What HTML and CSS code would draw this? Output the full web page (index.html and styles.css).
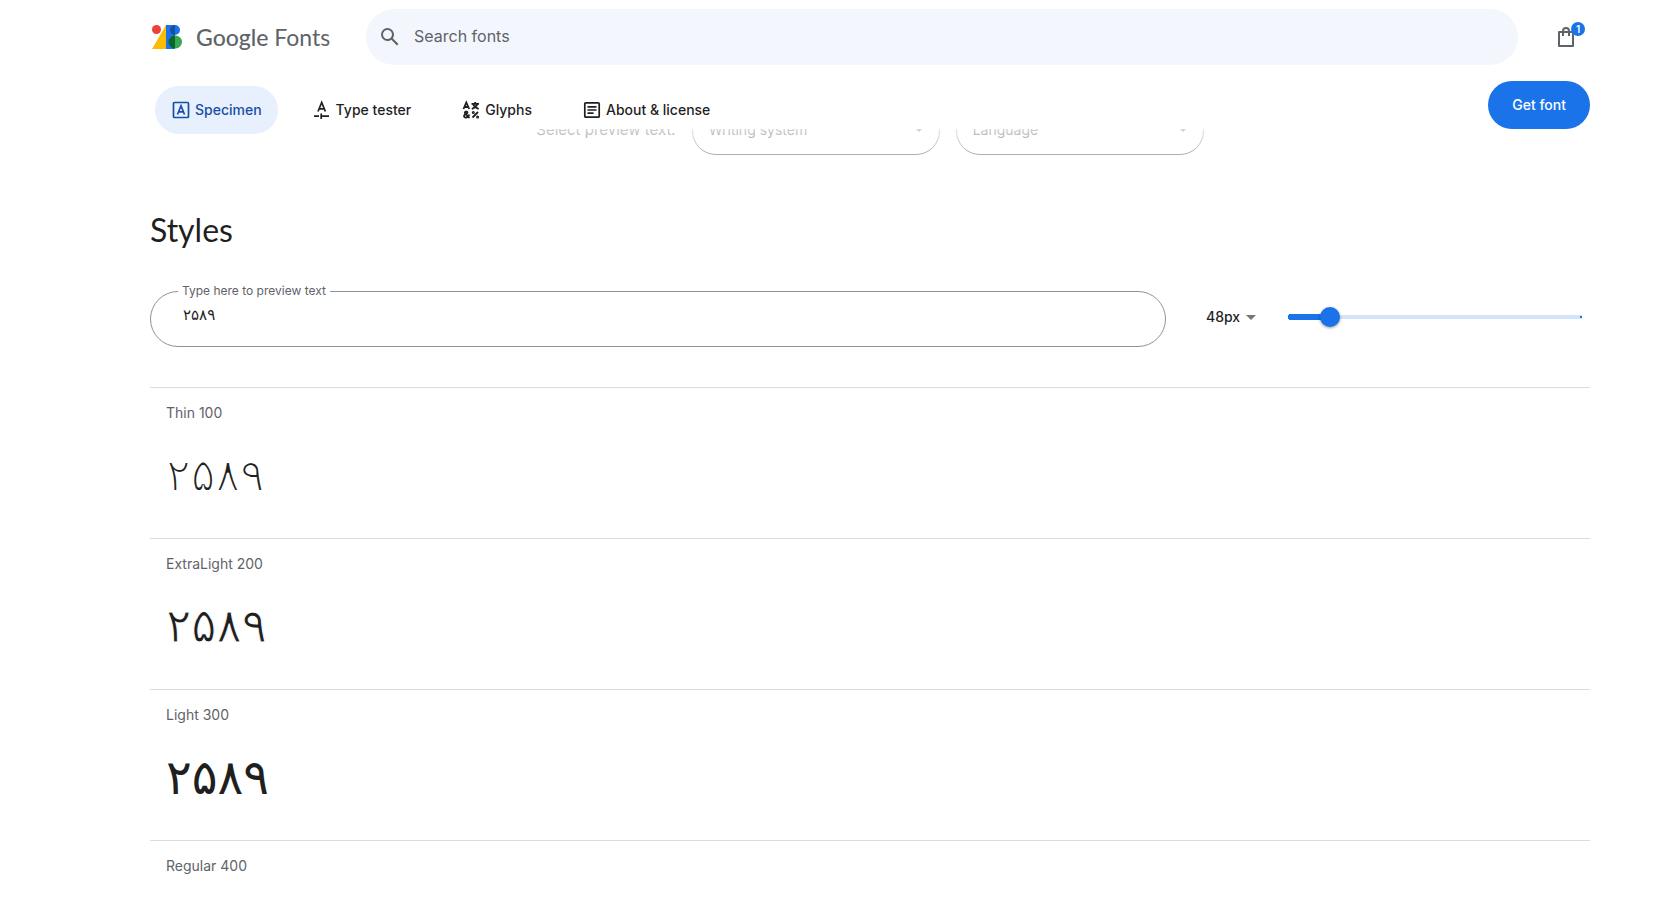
FILE: index.html
```html
<!DOCTYPE html>
<html lang="en">
<head>
<meta charset="utf-8">
<title>Styles - Google Fonts</title>
<link rel="stylesheet" href="styles.css">
</head>
<body>
<header class="header">
  <div class="topbar">
    <a class="brand" href="#">
      <svg class="brand-mark" viewBox="0 0 30 24" aria-hidden="true">
        <path d="M14 0v24H0z" fill="#fbbc04"/>
        <circle cx="4.500" cy="4.500" r="4.500" fill="#ea4335"/>
        <path d="M14 0h9a5 5 0 0 1 0 10v14h-9z" fill="#1a73e8"/>
        <circle cx="23.500" cy="17" r="6.500" fill="#34a853"/>
        <path d="M23 0a5 5 0 0 0 0 10z" fill="#174ea6"/>
        <path d="M23 10.500a6.500 6.500 0 0 0 0 13z" fill="#0d652d"/>
      </svg>
      <span class="brand-name"><b>Google</b> Fonts</span>
    </a>
    <div class="search">
      <svg class="icon24" viewBox="0 0 24 24" aria-hidden="true"><path fill="#5f6368" d="M20.490 19l-5.730-5.730C15.530 12.200 16 10.910 16 9.500A6.500 6.500 0 1 0 9.500 16c1.410 0 2.700-.470 3.770-1.240L19 20.490 20.490 19zM5 9.500C5 7.010 7.010 5 9.500 5S14 7.010 14 9.500 11.990 14 9.500 14 5 11.990 5 9.500z"/></svg>
      <input class="search-input" type="search" placeholder="Search fonts" aria-label="Search fonts">
    </div>
    <button class="bag" type="button" aria-label="View selected families">
      <svg class="icon24" viewBox="0 0 24 24" fill="none" stroke="#5f6368" stroke-width="2" aria-hidden="true"><path d="M5 7h14v14H5z" stroke-linejoin="round"/><path d="M9 11V6a3 3 0 0 1 6 0v5"/></svg>
      <span class="badge">1</span>
    </button>
  </div>
  <div class="subbar">
    <nav class="tabs">
      <a class="tab tab-active" href="#">
        <svg class="icon20" viewBox="0 0 20 20" fill="none" stroke="currentColor" stroke-width="1.700" aria-hidden="true"><rect x="2.500" y="2.500" width="15" height="15" rx="1"/><path d="M6.500 14.500L10 5.700l3.500 8.800M7.600 11.800h4.800"/></svg>
        Specimen</a>
      <a class="tab" href="#">
        <svg class="icon20" viewBox="0 0 20 20" fill="none" stroke="currentColor" stroke-width="1.700" aria-hidden="true"><path d="M6 11.500L9.700 2.500l3.700 9M7.200 8.800h5M2 16.200h5M9.200 13.500v5.500M9.200 16.200H17"/></svg>
        Type tester</a>
      <a class="tab" href="#">
        <svg class="icon20" viewBox="0 0 20 20" fill="none" stroke="currentColor" stroke-width="1.800" aria-hidden="true"><path d="M2.500 9L5.300 2.500 8.200 9M3.500 7h3.700M10.500 3.800h7.500M14.200 2v2M12 4c1 2.500 3 4 5.700 5M16.500 4c-1 2.500-3 4-5.700 5M8.500 18L4 13.200c-1-1.500 2.500-2.500 2.500-.700 0 1.500-3.500 1.500-3.500 3.500 0 2.500 4.500 2 5.300-1.500M11.500 17.500l5.500-5.500"/><circle cx="12.300" cy="12.500" r=".600"/><circle cx="16.600" cy="17" r=".600"/></svg>
        Glyphs</a>
      <a class="tab" href="#">
        <svg class="icon20" viewBox="0 0 20 20" fill="none" stroke="currentColor" stroke-width="1.700" aria-hidden="true"><rect x="2.800" y="2.800" width="14.400" height="14.400" rx="1"/><path d="M5.500 6.800h9M5.500 10h9M5.500 13.200h6"/></svg>
        About &amp; license</a>
    </nav>
    <button class="get-font" type="button">Get font</button>
  </div>
</header>

<main class="main">
  <div class="preview-row">
    <span class="preview-label">Select preview text:</span>
    <div class="pill-select">
      <select aria-label="Writing system"><option>Writing system</option></select>
      <svg class="caret" viewBox="0 0 10 5" aria-hidden="true"><path d="M0 0h10L5 5z"/></svg>
    </div>
    <div class="pill-select">
      <select aria-label="Language"><option>Language</option></select>
      <svg class="caret" viewBox="0 0 10 5" aria-hidden="true"><path d="M0 0h10L5 5z"/></svg>
    </div>
  </div>

  <h2 class="title">Styles</h2>

  <div class="controls">
    <div class="field">
      <label class="field-label" for="preview">Type here to preview text</label>
      <input class="field-input" id="preview" type="text" value="۲۵۸۹">
    </div>
    <div class="size">
      <select class="size-select" aria-label="Font size"><option>48px</option></select>
      <svg class="caret size-caret" viewBox="0 0 10 5" aria-hidden="true"><path d="M0 0h10L5 5z"/></svg>
    </div>
    <input class="slider" type="range" min="8" max="350" value="48" aria-label="Font size slider">
  </div>

  <section class="style">
    <h3 class="style-name">Thin 100</h3>
    <p class="sample sample-thin">۲۵۸۹</p>
  </section>
  <section class="style">
    <h3 class="style-name">ExtraLight 200</h3>
    <p class="sample sample-extralight">۲۵۸۹</p>
  </section>
  <section class="style">
    <h3 class="style-name">Light 300</h3>
    <p class="sample">۲۵۸۹</p>
  </section>
  <section class="style">
    <h3 class="style-name">Regular 400</h3>
  </section>
</main>
</body>
</html>
```
FILE: styles.css
```css
* { box-sizing: border-box; }

body {
  margin: 0;
  background: #fff;
  color: #1f1f1f;
  font: 14px/20px Inter, "Liberation Sans", sans-serif;
}

button, input, select { font: inherit; color: inherit; }

a { color: inherit; text-decoration: none; }

.header {
  position: relative;
  z-index: 1;
  padding: 9px 88px 0 150px;
  background: #fff;
}

.header::after {
  content: "";
  position: absolute;
  top: 100%;
  left: 0;
  right: 0;
  height: 32px;
  background: linear-gradient(rgba(255, 255, 255, .7), rgba(255, 255, 255, 0));
  pointer-events: none;
}

.topbar { display: flex; align-items: center; }

.brand {
  display: flex;
  align-items: center;
  gap: 14px;
  width: 216px;
  padding-left: 2px;
  color: #5f6368;
}

.brand-mark { width: 30px; height: 24px; }

.brand-name { font: 23px/28px Lato, sans-serif; }
.brand-name b { font-weight: 500; }

.search {
  flex: 1;
  display: flex;
  align-items: center;
  gap: 12px;
  height: 56px;
  padding: 0 12px;
  border-radius: 28px;
  background: #f3f6fd;
}

.search-input {
  flex: 1;
  border: 0;
  padding: 0 0 2px;
  background: none;
  outline: 0;
  font-size: 16px;
}
.search-input::placeholder { color: #5f6368; }

.icon24 { display: block; width: 24px; height: 24px; }
.icon20 { display: block; width: 20px; height: 20px; }

.bag {
  position: relative;
  margin: 0 12px 0 36px;
  padding: 0;
  border: 0;
  background: none;
}

.badge {
  position: absolute;
  top: -3px;
  right: -7px;
  width: 14px;
  height: 14px;
  border-radius: 50%;
  background: #1a73e8;
  color: #fff;
  font-size: 10px;
  font-weight: 600;
  line-height: 14px;
  text-align: center;
}

.subbar {
  display: flex;
  justify-content: space-between;
  align-items: flex-start;
  padding-top: 16px;
  height: 64px;
}

.tabs {
  position: relative;
  z-index: 1;
  display: flex;
  gap: 18px;
  padding: 5px 0 0 5px;
}

.tab {
  display: flex;
  align-items: center;
  gap: 4px;
  height: 48px;
  padding: 0 16px;
  border-radius: 24px;
  font-weight: 500;
}
.tab-active { background: #e8f0fe; color: #174ea6; }

.get-font {
  height: 48px;
  padding: 0 24px;
  border: 0;
  border-radius: 24px;
  background: #1a73e8;
  color: #fff;
  font-weight: 500;
}

.main { padding: 0 88px 0 150px; }

.preview-row {
  display: flex;
  justify-content: center;
  align-items: center;
  gap: 16px;
  margin-top: -22px;
  color: #5f6368;
}

.preview-label { padding-bottom: 2px; font-size: 15px; }

.pill-select {
  position: relative;
  width: 248px;
}
.pill-select select {
  display: block;
  appearance: none;
  width: 100%;
  height: 48px;
  padding: 0 16px 2px;
  border: 1px solid #9aa0a6;
  border-radius: 24px;
  background: none;
}

.caret {
  position: absolute;
  top: 20px;
  right: 16px;
  width: 10px;
  height: 5px;
  fill: #747775;
  pointer-events: none;
}

.title {
  margin: 55px 0 41px;
  font: 32px/40px Lato, sans-serif;
}

.controls { display: flex; align-items: flex-start; margin-bottom: 40px; }

.field { position: relative; flex: 1; }

.field-label {
  position: absolute;
  top: -8px;
  left: 28px;
  padding: 0 4px;
  background: #fff;
  color: #5f6368;
  font-size: 12px;
  line-height: 16px;
}

.field-input {
  display: block;
  width: 100%;
  height: 56px;
  padding: 0 32px 8px;
  border: 1px solid #919191;
  border-radius: 28px;
  background: none;
  font-family: "DejaVu Sans", sans-serif;
  font-size: 15px;
}

.size { position: relative; width: 50px; margin: 14px 32px 0 40px; }

.size-select {
  display: block;
  appearance: none;
  width: 100%;
  height: 24px;
  padding: 0;
  border: 0;
  background: none;
  font-weight: 500;
}
.size-caret { top: 10px; right: 0; }

.slider {
  appearance: none;
  width: 294px;
  height: 20px;
  margin: 16px 8px 0 0;
  background:
    linear-gradient(#1a73e8, #1a73e8) right center / 2px 2px no-repeat,
    linear-gradient(#1a73e8, #1a73e8) 3px center / 36px 6px no-repeat,
    radial-gradient(circle, #1a73e8 3px, transparent 3px) left center / 6px 6px no-repeat,
    linear-gradient(#d2e3fc, #d2e3fc) right center / 280px 4px no-repeat;
}
.slider::-webkit-slider-thumb {
  appearance: none;
  width: 20px;
  height: 20px;
  border-radius: 50%;
  background: #1a73e8;
  box-shadow: 0 1px 3px rgba(0, 0, 0, .4);
}

.style {
  padding: 15px 16px 35px;
  border-top: 1px solid #dadce0;
}
.style:last-child { padding-bottom: 0; }

.style-name {
  margin: 0;
  color: #5f6368;
  font-size: 14px;
  font-weight: 400;
}

.sample {
  margin: 24px 0 0;
  font: 48px/56px "DejaVu Sans", sans-serif;
}

/* A background-coloured outline thins the strokes for the lighter weights */
.sample-thin { font-size: 46px; -webkit-text-stroke: 2px #fff; }
.sample-extralight { font-size: 47px; -webkit-text-stroke: 1px #fff; }
```
